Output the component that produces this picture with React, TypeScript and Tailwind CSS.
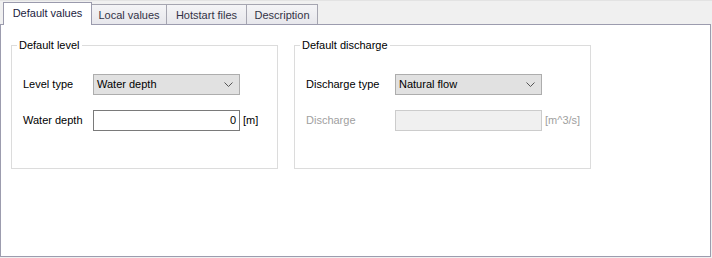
const TABS = ['Default values', 'Local values', 'Hotstart files', 'Description']

function Combo({ value }: { value: string }) {
  return (
    <div className="flex h-[21px] w-[147px] items-center justify-between border border-[#adadad] bg-[#e1e1e1] pl-[3px] pr-[6px] text-[#000]">
      <span>{value}</span>
      <svg width="9" height="5" viewBox="0 0 9 5" className="text-[#555]">
        <polyline points="0.5,0.5 4.5,4.5 8.5,0.5" fill="none" stroke="currentColor" strokeWidth="1" />
      </svg>
    </div>
  )
}

function GroupBox({ title, width, children }: { title: string; width: string; children: React.ReactNode }) {
  return (
    <div className={`relative h-[124px] border border-[#dcdcdc] ${width}`}>
      {/* Legend over the top border */}
      <span className="absolute -top-[8px] left-[5px] bg-white px-[2px] leading-[14px] text-[#000]">{title}</span>
      {children}
    </div>
  )
}

export default function App() {
  return (
    <div
      className="flex h-[258px] w-[712px] flex-col border-t border-[#e3e3e3] bg-[#f0f0f0] pb-[1px] pr-[1px] pt-[1px] text-[11px]"
      style={{ fontFamily: '"Liberation Sans", Arial, sans-serif' }}
    >
      {/* Tabs */}
      <div className="flex items-end pl-[3px]">
        {TABS.map((t, i) =>
          i === 0 ? (
            <div
              key={t}
              className="relative z-10 -mb-px flex h-[23px] w-[89px] items-center justify-center border border-b-0 border-[#9a9aac] bg-white pb-[1px] text-[#1c1c40]"
            >
              {t}
            </div>
          ) : (
            <div
              key={t}
              className={`flex h-[20px] items-center justify-center border border-b-0 border-l-0 border-[#a5a5b0] bg-gradient-to-b from-[#f4f4f6] to-[#e7e7ec] pt-[1px] text-[#333346] ${
                i === 1 ? 'w-[75px]' : i === 2 ? 'w-[80px]' : 'w-[71px]'
              }`}
            >
              {t}
            </div>
          )
        )}
      </div>

      {/* Panel */}
      <div className="flex flex-1 items-start gap-[16px] border border-[#9c9cae] bg-white pl-[10px] pt-[20px]">
        <GroupBox title="Default level" width="w-[267px]">
          <div className="flex flex-col gap-[15px] pl-[11px] pt-[28px]">
            <div className="flex items-center">
              <span className="w-[70px] text-[#000]">Level type</span>
              <Combo value="Water depth" />
            </div>
            <div className="flex items-center">
              <span className="w-[70px] text-[#000]">Water depth</span>
              <div className="flex h-[21px] w-[147px] items-center justify-end border border-[#7a7a7a] bg-white pr-[3px] text-[#000]">
                0
              </div>
              <span className="ml-[3px] text-[#000]">[m]</span>
            </div>
          </div>
        </GroupBox>

        <GroupBox title="Default discharge" width="w-[297px]">
          <div className="flex flex-col gap-[15px] pl-[11px] pt-[28px]">
            <div className="flex items-center">
              <span className="w-[89px] text-[#000]">Discharge type</span>
              <Combo value="Natural flow" />
            </div>
            <div className="flex items-center">
              <span className="w-[89px] text-[#a0a0a0]">Discharge</span>
              <div className="h-[21px] w-[147px] border border-[#cccccc] bg-[#f0f0f0]" />
              <span className="ml-[3px] text-[#a0a0a0]">[m^3/s]</span>
            </div>
          </div>
        </GroupBox>
      </div>
    </div>
  )
}
